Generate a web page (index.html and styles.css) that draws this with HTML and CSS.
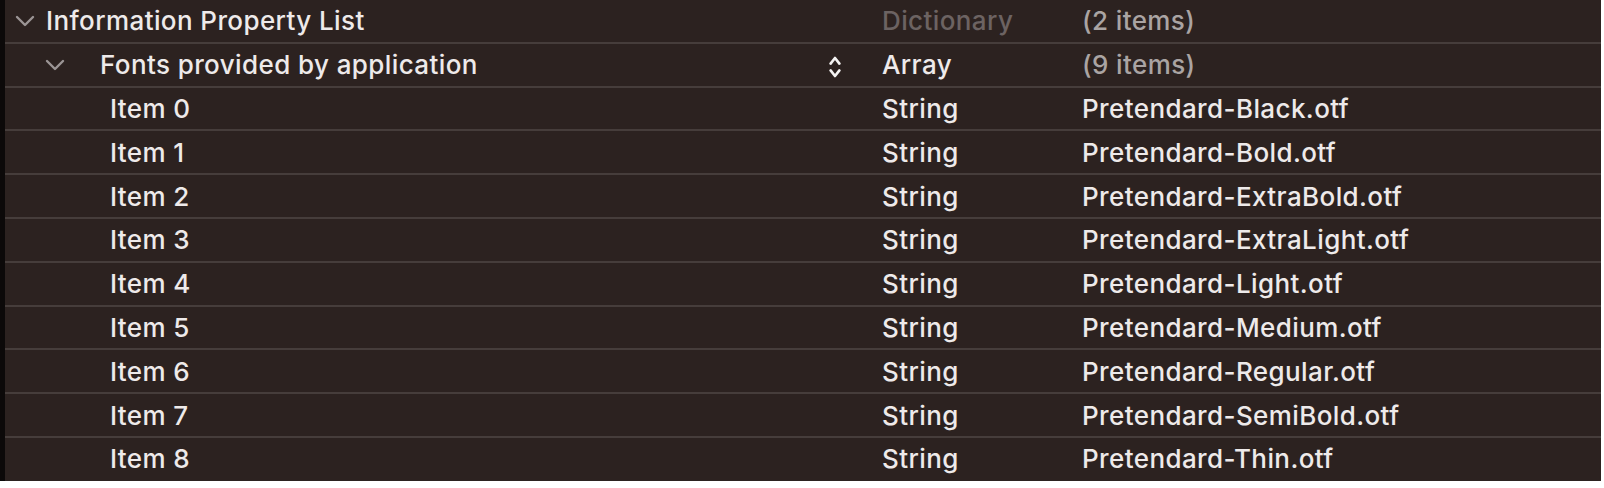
FILE: index.html
```html
<!DOCTYPE html>
<html>
<head>
<meta charset="utf-8">
<link rel="stylesheet" href="styles.css">
</head>
<body>
<div class="plist">
  <div class="row">
    <div class="key lvl0">
      <svg class="chev" width="20" height="12" viewBox="0 0 20 12"><path d="M2 2 L10 10 L18 2" fill="none" stroke="#9b9595" stroke-width="2.4" stroke-linecap="round" stroke-linejoin="round"/></svg>
      <span>Information Property List</span>
    </div>
    <div class="type dim">Dictionary</div>
    <div class="value muted">(2 items)</div>
  </div>
  <div class="row">
    <div class="key lvl1">
      <svg class="chev" width="22" height="12" viewBox="0 0 22 12"><path d="M3 2 L11 10 L19 2" fill="none" stroke="#9b9595" stroke-width="2.4" stroke-linecap="round" stroke-linejoin="round"/></svg>
      <span class="keytext">Fonts provided by application</span>
      <svg class="stepper" width="12" height="24" viewBox="0 0 12 24"><path d="M1.6 8.6 L6 3 L10.4 8.6" fill="none" stroke="#f4f2f2" stroke-width="2.6" stroke-linecap="round" stroke-linejoin="round"/><path d="M1.6 15.4 L6 21 L10.4 15.4" fill="none" stroke="#f4f2f2" stroke-width="2.6" stroke-linecap="round" stroke-linejoin="round"/></svg>
    </div>
    <div class="type">Array</div>
    <div class="value muted">(9 items)</div>
  </div>
  <div class="row"><div class="key lvl2">Item 0</div><div class="type">String</div><div class="value">Pretendard-Black.otf</div></div>
  <div class="row"><div class="key lvl2">Item 1</div><div class="type">String</div><div class="value">Pretendard-Bold.otf</div></div>
  <div class="row"><div class="key lvl2">Item 2</div><div class="type">String</div><div class="value">Pretendard-ExtraBold.otf</div></div>
  <div class="row"><div class="key lvl2">Item 3</div><div class="type">String</div><div class="value">Pretendard-ExtraLight.otf</div></div>
  <div class="row"><div class="key lvl2">Item 4</div><div class="type">String</div><div class="value">Pretendard-Light.otf</div></div>
  <div class="row"><div class="key lvl2">Item 5</div><div class="type">String</div><div class="value">Pretendard-Medium.otf</div></div>
  <div class="row"><div class="key lvl2">Item 6</div><div class="type">String</div><div class="value">Pretendard-Regular.otf</div></div>
  <div class="row"><div class="key lvl2">Item 7</div><div class="type">String</div><div class="value">Pretendard-SemiBold.otf</div></div>
  <div class="row last"><div class="key lvl2">Item 8</div><div class="type">String</div><div class="value">Pretendard-Thin.otf</div></div>
</div>
</body>
</html>
```
FILE: styles.css
```css
html, body {
  margin: 0;
  padding: 0;
  background: #ffffff;
}
.plist {
  width: 1596px;
  height: 481px;
  background: #2c2220;
  border-left: 5px solid #0c0909;
  font-family: Inter, "Noto Sans", sans-serif;
  font-size: 26px;
  font-weight: 500;
  letter-spacing: 0.4px;
  color: #eeeaea;
  overflow: hidden;
}
.row {
  display: grid;
  grid-template-columns: 877px 200px 1fr;
  height: 41.8px;
  border-bottom: 2px solid #463d3b;
  align-items: center;
}
.row.last {
  border-bottom: none;
}
.key {
  display: flex;
  align-items: center;
  white-space: nowrap;
}
.lvl0 {
  padding-left: 10px;
}
.lvl0 .chev {
  margin-right: 11px;
}
.lvl1 {
  padding-left: 39px;
}
.lvl1 .chev {
  margin-right: 34px;
}
.lvl1 .keytext {
  flex: 1;
}
.stepper {
  margin-right: 41px;
  margin-top: 4px;
}
.lvl2 {
  padding-left: 105px;
}
.type, .value {
  white-space: nowrap;
}
.dim {
  color: #6c6362;
}
.muted {
  color: #aaa4a3;
}
```
